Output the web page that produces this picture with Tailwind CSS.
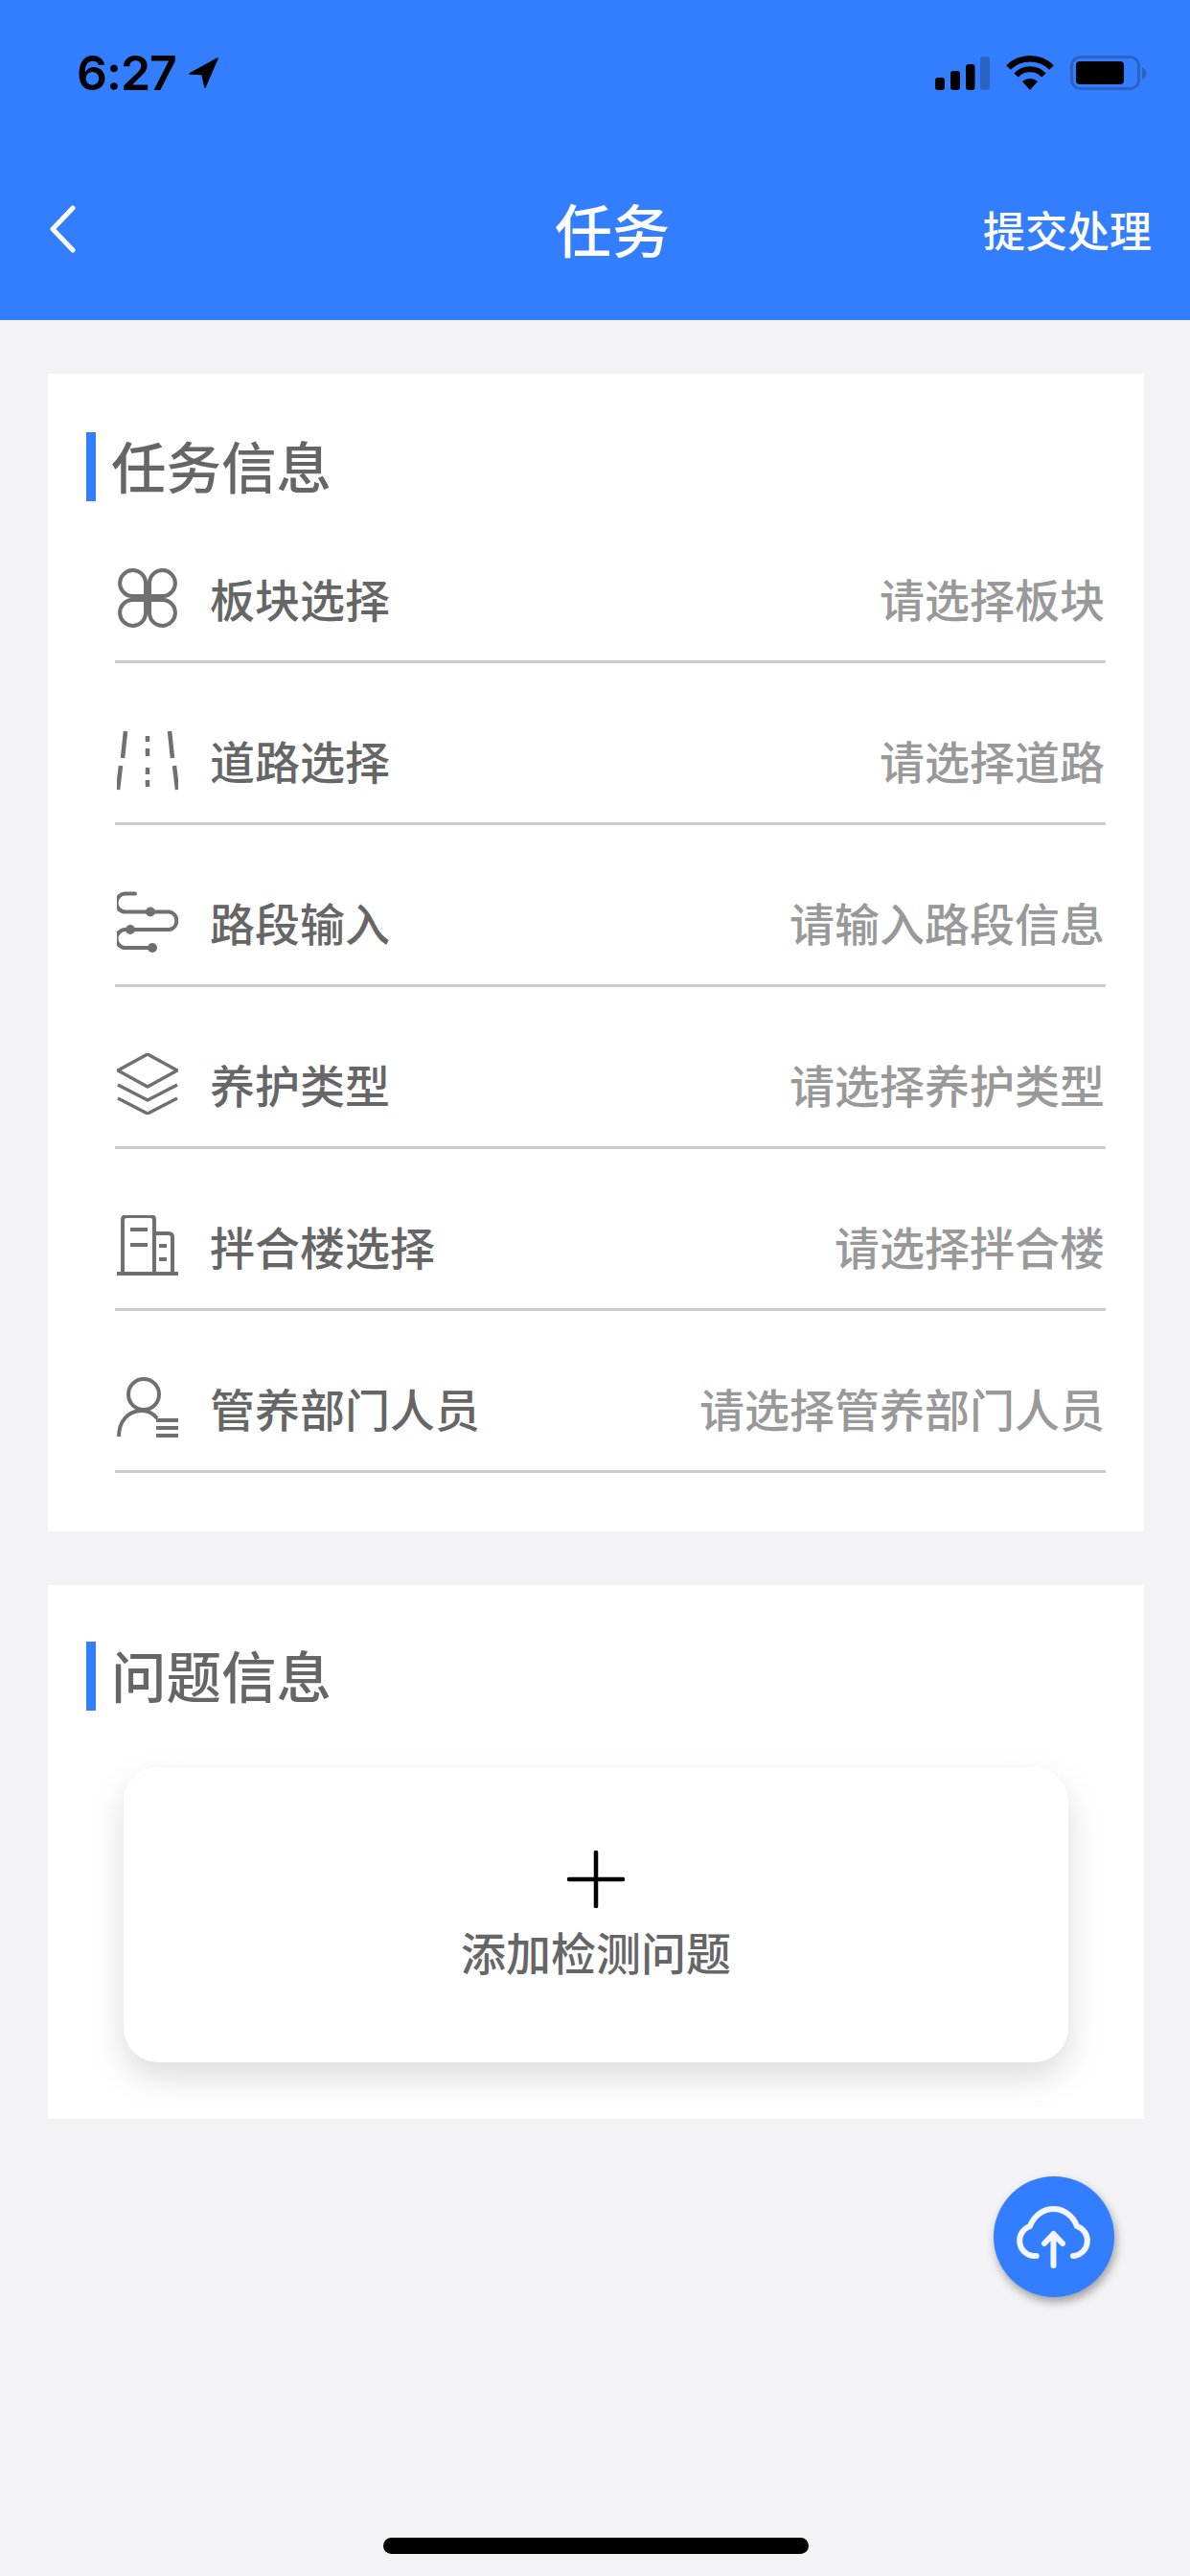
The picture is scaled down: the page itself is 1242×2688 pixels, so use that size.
<!DOCTYPE html>
<html lang="zh-CN">
<head>
  <meta charset="UTF-8">
  <meta name="viewport" content="width=device-width, initial-scale=1.0">
  <title>任务</title>
  <script src="https://cdn.jsdelivr.net/npm/@tailwindcss/browser@4"></script>
</head>
<body class="bg-[#f3f3f5] font-['Noto_Sans_CJK_SC',sans-serif]">
  <div class="relative w-[1242px] h-[2688px] overflow-hidden">
    <!-- 顶部导航 -->
    <header class="h-[334px] bg-[#337eff]">
      <div class="h-[156px] pt-[48px] pl-[80px] pr-[45px] flex items-start justify-between">
        <div class="flex items-center gap-[12px] h-[56px]">
          <span class="font-['Inter',sans-serif] font-semibold text-[50px] leading-[56px] tracking-[-1px] text-black">6:27</span>
          <svg class="w-[34px] h-[34px]" viewBox="0 0 34 34"><path d="M31 2 L2 18 L15 18.500 L18 32 Z" fill="#000" stroke="#000" stroke-width="1.500" stroke-linejoin="round"/></svg>
        </div>
        <div class="flex items-center gap-[17px] h-[56px]">
          <svg class="w-[57px] h-[36px]" viewBox="0 0 57 36">
            <rect x="0" y="23" width="10" height="13" rx="3" fill="#000"/>
            <rect x="16" y="16" width="10" height="20" rx="3" fill="#000"/>
            <rect x="32" y="9" width="9.500" height="27" rx="3" fill="#000"/>
            <rect x="47" y="1" width="10" height="35" rx="3" fill="#2a63c4"/>
          </svg>
          <svg class="w-[50px] h-[36px]" viewBox="0 0 50 36">
            <path d="M2.500 12.500 A32 32 0 0 1 47.500 12.500" fill="none" stroke="#000" stroke-width="6.500"/>
            <path d="M10.500 20.500 A20 20 0 0 1 39.500 20.500" fill="none" stroke="#000" stroke-width="6"/>
            <path d="M17 27 L25 36 L33 27 A12 12 0 0 0 17 27 Z" fill="#000"/>
          </svg>
          <svg class="w-[80px] h-[36px]" viewBox="0 0 80 36">
            <rect x="1.500" y="1.500" width="70" height="33" rx="9" fill="none" stroke="#2a63c4" stroke-width="3"/>
            <rect x="6" y="6" width="50" height="24" rx="4" fill="#000"/>
            <path d="M75 12 A7 7 0 0 1 75 25 Z" fill="#2a63c4"/>
          </svg>
        </div>
      </div>
      <div class="relative h-[168px] flex items-center justify-center pl-[36px] pb-[4px]">
        <svg class="absolute left-[50px] top-[58px] w-[30px] h-[50px]" viewBox="0 0 30 50"><path d="M26 3 L5 25 L26 47" fill="none" stroke="#fff" stroke-width="5" stroke-linecap="round" stroke-linejoin="round"/></svg>
        <h1 class="text-[60px] leading-[80px] font-medium text-white">任务</h1>
        <span class="absolute right-[40px] top-[61px] text-[44px] leading-[44px] font-medium text-white">提交处理</span>
      </div>
    </header>

    <!-- 任务信息 -->
    <section class="mt-[56px] ml-[50px] mr-[48px] h-[1208px] bg-white pt-[61px]">
      <div class="h-[72px] border-l-[10px] border-[#337eff] ml-[40px] pl-[16px] pb-[4px] flex items-center">
        <h2 class="text-[57.500px] leading-[68px] font-medium text-[#666]">任务信息</h2>
      </div>
      <div class="ml-[70px] mr-[40px] flex flex-col">
        <div class="h-[169px] pt-[36px] border-b-[3px] border-[#cccccc] flex items-center justify-between">
          <div class="flex items-center gap-[33px]">
            <svg class="w-[64px] h-[64px] ml-[2px]" viewBox="0 0 64 64" fill="none" stroke="#707070" stroke-width="4">
              <path d="M30 30 H15 A13.500 13.500 0 1 1 30 15 Z"/>
              <path d="M34 30 H49 A13.500 13.500 0 1 0 34 15 Z"/>
              <path d="M30 34 H15 A13.500 13.500 0 1 0 30 49 Z"/>
              <path d="M34 34 H49 A13.500 13.500 0 1 1 34 49 Z"/>
            </svg>
            <span class="text-[47px] leading-[64px] font-medium text-[#666]">板块选择</span>
          </div>
          <span class="text-[47px] leading-[64px] font-medium text-[#999] pr-[1px]">请选择板块</span>
        </div>
        <div class="h-[169px] pt-[36px] border-b-[3px] border-[#cccccc] flex items-center justify-between">
          <div class="flex items-center gap-[33px]">
            <svg class="w-[64px] h-[64px] ml-[2px]" viewBox="0 0 64 64" fill="none" stroke="#707070" stroke-width="4.500">
              <path d="M9 2 L6 30 M4 38 L1 63 M55 2 L58 30 M60 38 L63 63"/>
              <path d="M32 7 V13 M32 20 V28 M32 40 V47 M32 53 V60"/>
            </svg>
            <span class="text-[47px] leading-[64px] font-medium text-[#666]">道路选择</span>
          </div>
          <span class="text-[47px] leading-[64px] font-medium text-[#999] pr-[1px]">请选择道路</span>
        </div>
        <div class="h-[169px] pt-[36px] border-b-[3px] border-[#cccccc] flex items-center justify-between">
          <div class="flex items-center gap-[33px]">
            <svg class="w-[64px] h-[64px] ml-[2px]" viewBox="0 0 64 64" fill="none" stroke="#707070" stroke-width="4" stroke-linecap="round">
              <path d="M19 2.500 H9 A9.500 9.500 0 0 0 9 21.500 H55 A9.500 9.500 0 0 1 55 40 H14 M14 40 H9 A9.500 9.500 0 0 0 9 59 H37"/>
              <g fill="#707070" stroke="none">
                <circle cx="35" cy="21.500" r="5"/>
                <circle cx="14" cy="40" r="5"/>
                <circle cx="37" cy="59" r="5"/>
              </g>
            </svg>
            <span class="text-[47px] leading-[64px] font-medium text-[#666]">路段输入</span>
          </div>
          <span class="text-[47px] leading-[64px] font-medium text-[#999] pr-[1px]">请输入路段信息</span>
        </div>
        <div class="h-[169px] pt-[36px] border-b-[3px] border-[#cccccc] flex items-center justify-between">
          <div class="flex items-center gap-[33px]">
            <svg class="w-[64px] h-[64px] ml-[2px]" viewBox="0 0 64 64" fill="none" stroke="#707070" stroke-width="3.500" stroke-linejoin="round">
              <path d="M32 1 L63 18 L32 35 L1 18 Z"/>
              <path d="M1 33 L32 49 L63 33"/>
              <path d="M1 47 L32 63 L63 47"/>
            </svg>
            <span class="text-[47px] leading-[64px] font-medium text-[#666]">养护类型</span>
          </div>
          <span class="text-[47px] leading-[64px] font-medium text-[#999] pr-[1px]">请选择养护类型</span>
        </div>
        <div class="h-[169px] pt-[36px] border-b-[3px] border-[#cccccc] flex items-center justify-between">
          <div class="flex items-center gap-[33px]">
            <svg class="w-[64px] h-[64px] ml-[2px]" viewBox="0 0 64 64" fill="none" stroke="#707070" stroke-width="4">
              <path d="M0 61 H64"/>
              <path d="M6 61 V5 Q6 1 10 1 H35 Q39 1 39 5 V61"/>
              <path d="M39 19 H54 Q58 19 58 23 V61"/>
              <path d="M14 15 H32 M14 31 H32 M44 32 H52 M44 46 H52"/>
            </svg>
            <span class="text-[47px] leading-[64px] font-medium text-[#666]">拌合楼选择</span>
          </div>
          <span class="text-[47px] leading-[64px] font-medium text-[#999] pr-[1px]">请选择拌合楼</span>
        </div>
        <div class="h-[169px] pt-[36px] border-b-[3px] border-[#cccccc] flex items-center justify-between">
          <div class="flex items-center gap-[33px]">
            <svg class="w-[64px] h-[64px] ml-[2px]" viewBox="0 0 64 64" fill="none" stroke="#707070" stroke-width="4">
              <circle cx="28" cy="18" r="16"/>
              <path d="M2 62 C2 46 12 35 26 35 C33 35 38 38 42 43"/>
              <path d="M41 45 H64 M41 53 H64 M41 61 H64"/>
            </svg>
            <span class="text-[47px] leading-[64px] font-medium text-[#666]">管养部门人员</span>
          </div>
          <span class="text-[47px] leading-[64px] font-medium text-[#999] pr-[1px]">请选择管养部门人员</span>
        </div>
      </div>
    </section>

    <!-- 问题信息 -->
    <section class="mt-[56px] ml-[50px] mr-[48px] h-[557px] bg-white pt-[59px]">
      <div class="h-[72px] border-l-[10px] border-[#337eff] ml-[40px] pl-[16px] pb-[4px] flex items-center">
        <h2 class="text-[57.500px] leading-[68px] font-medium text-[#666]">问题信息</h2>
      </div>
      <div class="mt-[59px] ml-[79px] w-[986px] h-[308px] bg-white rounded-[36px] shadow-[0_16px_36px_rgba(0,0,0,0.14)] flex flex-col items-center pt-[87px]">
        <svg class="w-[60px] h-[60px]" viewBox="0 0 60 60"><path d="M30 2 V58 M2 30 H58" stroke="#000" stroke-width="4.500" stroke-linecap="round"/></svg>
        <span class="mt-[15px] text-[47px] leading-[60px] font-medium text-[#666]">添加检测问题</span>
      </div>
    </section>

    <!-- 上传按钮 -->
    <button class="absolute left-[1037px] top-[2271px] w-[126px] h-[126px] rounded-full bg-[#337eff] shadow-[2px_5px_10px_rgba(0,0,0,0.35)] flex items-center justify-center">
      <svg class="w-[80px] h-[70px]" viewBox="0 0 80 70" fill="none" stroke="#f3f6ff" stroke-width="6" stroke-linecap="round" stroke-linejoin="round">
        <path d="M21.700 55 H18 A16 16 0 0 1 15 24 C19 13 29 6 39.500 6 C50 6 60 13 64 24 A16 16 0 0 1 61 55 H60"/>
        <path d="M39.500 65 V32 M30 42 L39.500 32 L49 42"/>
      </svg>
    </button>

    <!-- Home 指示条 -->
    <div class="absolute left-[400px] top-[2648px] w-[444px] h-[17px] rounded-full bg-black"></div>
  </div>
</body>
</html>
